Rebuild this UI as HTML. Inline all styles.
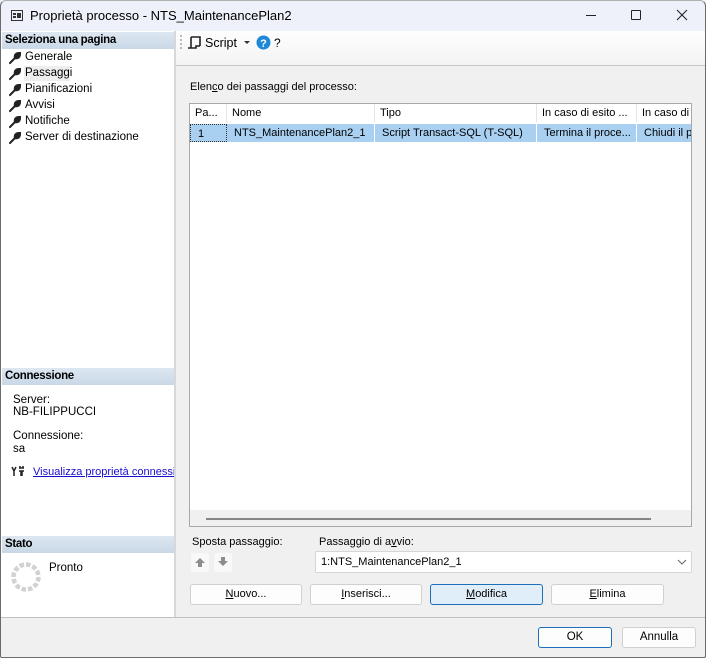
<!DOCTYPE html>
<html><head><meta charset="utf-8"><style>
*{box-sizing:border-box;margin:0;padding:0}
body{width:706px;height:658px;overflow:hidden;font-family:"Liberation Sans",sans-serif;font-size:11.5px;color:#000;background:#f0f0f0;position:relative}
.a{position:absolute}
.hdr{position:absolute;left:2px;width:172px;height:17px;background:linear-gradient(#dde7f1,#c9d8e7);font-weight:bold;font-size:11.5px;padding:2px 0 0 3px;letter-spacing:-0.3px}
.nav{position:absolute;left:9px;font-size:11.5px;height:15px}
.nav svg{position:absolute;left:0;top:1px}
.nav span{position:absolute;left:16px;top:0;white-space:nowrap}
.btn{position:absolute;height:21px;background:#fdfdfd;border:1px solid #d0d0d0;border-radius:3px;text-align:center;line-height:19px;font-size:11.5px}
.col{position:absolute;top:0;height:18px;border-right:1px solid #e5e5e5;padding:3px 0 0 5px;white-space:nowrap;overflow:hidden;font-size:11px}
.cell{position:absolute;top:0;height:18px;border-right:1px solid #fff;padding:3px 0 0 7px;white-space:nowrap;overflow:hidden;font-size:11px}
u{text-decoration:underline}
</style></head><body>
<div class="a" style="left:0;top:0;width:706px;height:658px;border:1px solid #6b6b6b;border-top-color:#b0b0b0;border-radius:6px 6px 2px 2px;z-index:10;pointer-events:none"></div>
<div class="a" style="left:0;top:0;width:706px;height:31px;background:#eef1f9"></div>
<svg class="a" style="left:11px;top:10px" width="12" height="11"><rect x="0.5" y="0.5" width="11" height="10" fill="none" stroke="#333"/><rect x="2" y="3" width="3" height="2" fill="#333"/><rect x="2" y="6" width="3" height="2" fill="#333"/><rect x="6" y="3" width="4" height="5" fill="#333"/></svg>
<div class="a" style="left:30px;top:8px;font-size:13px;white-space:nowrap">Proprietà processo - NTS_MaintenancePlan2</div>
<div class="a" style="left:586px;top:15px;width:10px;height:1px;background:#222"></div>
<div class="a" style="left:631px;top:10px;width:10px;height:10px;border:1px solid #222;border-radius:1px"></div>
<svg class="a" style="left:676px;top:9px" width="12" height="12"><path d="M1 1L11 11M11 1L1 11" stroke="#222" stroke-width="1.1"/></svg>

<div class="a" style="left:1px;top:31px;width:173px;height:586px;background:#fff"></div>
<div class="a" style="left:174px;top:31px;width:2px;height:586px;background:#d8d8d8"></div>
<div class="hdr" style="top:32px">Seleziona una pagina</div>
<div class="a" style="left:24px;top:66px;width:46px;height:15px;background:#eeeeee"></div>
<svg width="0" height="0" style="position:absolute"><defs><symbol id="w" viewBox="0 0 12 12"><path d="M1 11L6 6M6 6C5 3 7 1 10 1L8 3L9 4L11 2C11 5 9 7 6 6Z" stroke="#222" stroke-width="2" fill="#222" stroke-linecap="round"/></symbol></defs></svg>
<div class="nav" style="top:51px"><svg width="12" height="12"><use href="#w"/></svg><span>Generale</span></div>
<div class="nav" style="top:67px"><svg width="12" height="12"><use href="#w"/></svg><span>Passaggi</span></div>
<div class="nav" style="top:83px"><svg width="12" height="12"><use href="#w"/></svg><span>Pianificazioni</span></div>
<div class="nav" style="top:99px"><svg width="12" height="12"><use href="#w"/></svg><span>Avvisi</span></div>
<div class="nav" style="top:115px"><svg width="12" height="12"><use href="#w"/></svg><span>Notifiche</span></div>
<div class="nav" style="top:131px"><svg width="12" height="12"><use href="#w"/></svg><span>Server di destinazione</span></div>

<div class="hdr" style="top:368px">Connessione</div>
<div class="a" style="left:13px;top:394px">Server:</div>
<div class="a" style="left:13px;top:406px">NB-FILIPPUCCI</div>
<div class="a" style="left:13px;top:430px">Connessione:</div>
<div class="a" style="left:13px;top:443px">sa</div>
<svg class="a" style="left:11px;top:466px" width="14" height="11"><path d="M1 1L3 5L5 1M3 5V10M8 2H13M8 5H13M10 5V10M11 5V10M9 0V2M12 0V2" stroke="#222" stroke-width="1.5" fill="none"/></svg>
<div class="a" style="left:33px;top:466px;color:#1a0dcc;text-decoration:underline;white-space:nowrap;width:141px;overflow:hidden;font-size:11px">Visualizza proprietà connessione</div>

<div class="hdr" style="top:536px">Stato</div>
<svg class="a" style="left:10px;top:561px" width="32" height="32"><circle cx="16" cy="16" r="12.5" fill="none" stroke="#d2d2d2" stroke-width="4.5" stroke-dasharray="4.5 2"/></svg>
<div class="a" style="left:49px;top:562px">Pronto</div>

<div class="a" style="left:176px;top:31px;width:529px;height:35px;background:linear-gradient(#fefefe,#f3f3f3);border-bottom:1px solid #c8c8c8"></div>
<div class="a" style="left:180px;top:35px;width:1px;height:14px;border-left:2px dotted #bbb"></div>
<svg class="a" style="left:187px;top:35px" width="15" height="15"><path d="M4 2H13V11M4 2V13H1M4 13H9V11H13" stroke="#222" stroke-width="1.6" fill="none"/></svg>
<div class="a" style="left:205px;top:36px;font-size:12.5px">Script</div>
<svg class="a" style="left:244px;top:41px" width="6" height="4"><path d="M0 0H6L3 3Z" fill="#333"/></svg>
<svg class="a" style="left:256px;top:35px" width="15" height="15"><circle cx="7.5" cy="7.5" r="7" fill="#1e88d8"/><text x="7.5" y="12" font-size="11" font-weight="bold" fill="#fff" text-anchor="middle" font-family="Liberation Sans">?</text></svg>
<div class="a" style="left:274px;top:36px;font-size:12px">?</div>

<div class="a" style="left:190px;top:81px;font-size:11px">Elen<u>c</u>o dei passaggi del processo:</div>
<div class="a" style="left:189px;top:103px;width:503px;height:424px;background:#fff;border:1px solid #a8a8a8;overflow:hidden">
 <div class="a" style="left:0;top:0;width:503px;height:19px">
  <div class="col" style="left:0;width:37px">Pa...</div>
  <div class="col" style="left:37px;width:148px">Nome</div>
  <div class="col" style="left:185px;width:162px">Tipo</div>
  <div class="col" style="left:347px;width:100px">In caso di esito ...</div>
  <div class="col" style="left:447px;width:60px">In caso di</div>
 </div>
 <div class="a" style="left:0;top:20px;width:503px;height:18px;background:#a9d0f1">
  <div class="cell" style="left:0;width:37px;border:1px dotted #333">1</div>
  <div class="cell" style="left:37px;width:148px">NTS_MaintenancePlan2_1</div>
  <div class="cell" style="left:185px;width:162px">Script Transact-SQL (T-SQL)</div>
  <div class="cell" style="left:347px;width:100px">Termina il proce...</div>
  <div class="cell" style="left:447px;width:60px">Chiudi il pr</div>
 </div>
 <div class="a" style="left:0;top:406px;width:503px;height:17px;background:#f0f0f0"></div>
 <div class="a" style="left:16px;top:414px;width:445px;height:2px;background:#858585"></div>
</div>

<div class="a" style="left:192px;top:536px;font-size:11px">Sposta passaggio:</div>
<div class="a" style="left:191px;top:553px;width:18px;height:19px;background:#f8f8f8;border-radius:2px"></div>
<div class="a" style="left:214px;top:553px;width:18px;height:19px;background:#f8f8f8;border-radius:2px"></div>
<svg class="a" style="left:195px;top:557px" width="10" height="10"><path d="M5 1L10 6H7V10H3V6H0Z" fill="#8c8c8c"/></svg>
<svg class="a" style="left:218px;top:557px" width="10" height="10"><path d="M5 9L10 4H7V0H3V4H0Z" fill="#8c8c8c"/></svg>

<div class="a" style="left:319px;top:536px;font-size:11px">Passaggio di a<u>v</u>vio:</div>
<div class="a" style="left:315px;top:551px;width:377px;height:22px;background:#fff;border:1px solid #d6d6d6;border-radius:2px;padding:4px 0 0 5px;font-size:11px">1:NTS_MaintenancePlan2_1</div>
<svg class="a" style="left:677px;top:559px" width="10" height="6"><path d="M1 1L5 5L9 1" stroke="#666" fill="none"/></svg>

<div class="btn" style="left:190px;top:584px;width:112px;font-size:11px"><u>N</u>uovo...</div>
<div class="btn" style="left:310px;top:584px;width:112px;font-size:11px"><u>I</u>nserisci...</div>
<div class="btn" style="left:430px;top:584px;width:113px;background:#e0eef9;border-color:#1c6fb8;font-size:11px"><u>M</u>odifica</div>
<div class="btn" style="left:551px;top:584px;width:113px;font-size:11px"><u>E</u>limina</div>

<div class="a" style="left:1px;top:617px;width:704px;height:1px;background:#c0c0c0"></div>
<div class="btn" style="left:538px;top:627px;width:74px;border-color:#1c6fb8">OK</div>
<div class="btn" style="left:622px;top:627px;width:74px">Annulla</div>
</body></html>
